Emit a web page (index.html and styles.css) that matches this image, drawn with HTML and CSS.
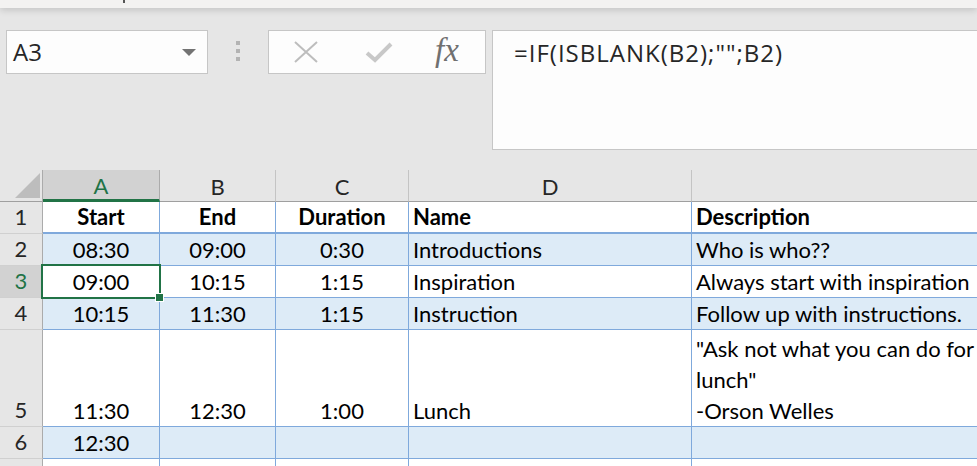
FILE: index.html
```html
<!DOCTYPE html>
<html lang="en">
<head>
  <meta charset="UTF-8">
  <title>Schedule - Excel</title>
  <link rel="stylesheet" href="styles.css">
</head>
<body>
  <div class="ribbon-edge"><span class="caret"></span></div>

  <div class="formula-row">
    <div class="name-box">
      <span>A3</span>
      <svg class="drop" width="14" height="8" viewBox="0 0 14 8"><path d="M0 0 L14 0 L7 7 Z" fill="#737373"/></svg>
    </div>
    <div class="grip"><i></i><i></i><i></i></div>
    <div class="fx-buttons">
      <svg class="cancel" width="26" height="22" viewBox="0 0 26 22"><path d="M2 1 L24 21 M24 1 L2 21" stroke="#bdbdbd" stroke-width="2" fill="none"/></svg>
      <svg class="enter" width="28" height="22" viewBox="0 0 28 22"><path d="M2 12 L10 19 L26 3" stroke="#c8c8c8" stroke-width="4" fill="none"/></svg>
      <span class="fx">fx</span>
    </div>
    <div class="formula-bar">=IF(ISBLANK(B2);"";B2)</div>
  </div>

  <div class="sheet">
    <div class="corner"><span></span></div>
    <div class="col-head active">A</div>
    <div class="col-head">B</div>
    <div class="col-head">C</div>
    <div class="col-head">D</div>
    <div class="col-head last"></div>

    <div class="row-head">1</div>
    <div class="cell c b">Start</div>
    <div class="cell c b">End</div>
    <div class="cell c b">Duration</div>
    <div class="cell b">Name</div>
    <div class="cell b">Description</div>

    <div class="row-head">2</div>
    <div class="cell c band">08:30</div>
    <div class="cell c band">09:00</div>
    <div class="cell c band">0:30</div>
    <div class="cell band">Introductions</div>
    <div class="cell band">Who is who??</div>

    <div class="row-head active">3</div>
    <div class="cell c sel">09:00<span class="selection"><span class="handle"></span></span></div>
    <div class="cell c">10:15</div>
    <div class="cell c">1:15</div>
    <div class="cell">Inspiration</div>
    <div class="cell">Always start with inspiration</div>

    <div class="row-head">4</div>
    <div class="cell c band">10:15</div>
    <div class="cell c band">11:30</div>
    <div class="cell c band">1:15</div>
    <div class="cell band">Instruction</div>
    <div class="cell band">Follow up with instructions.</div>

    <div class="row-head">5</div>
    <div class="cell c">11:30</div>
    <div class="cell c">12:30</div>
    <div class="cell c">1:00</div>
    <div class="cell">Lunch</div>
    <div class="cell">"Ask not what you can do for your<br>lunch"<br>-Orson Welles</div>

    <div class="row-head">6</div>
    <div class="cell c band">12:30</div>
    <div class="cell band"></div>
    <div class="cell band"></div>
    <div class="cell band"></div>
    <div class="cell band"></div>

    <div class="row-head"></div>
    <div class="cell"></div>
    <div class="cell"></div>
    <div class="cell"></div>
    <div class="cell"></div>
    <div class="cell"></div>
  </div>
</body>
</html>
```

FILE: styles.css
```css
* { box-sizing: border-box; }
body {
  margin: 0; background: #e6e6e6; overflow: hidden;
  font-family: Lato, "Liberation Sans", sans-serif; color: #000;
}

.ribbon-edge {
  height: 8px; background: #f3f2f1; position: relative;
  box-shadow: 0 2px 7px rgba(0,0,0,0.16);
}
.caret { position: absolute; left: 123px; top: 0; width: 2px; height: 3px; background: #555; }

.formula-row {
  display: flex; align-items: flex-start;
  padding: 22px 0 0 6px;
  font-family: "Open Sans", "Noto Sans", sans-serif;
}
.name-box {
  width: 202px; height: 44px; background: #fdfdfd; border: 1px solid #c6c6c6;
  display: flex; align-items: center; justify-content: space-between;
  padding: 0 11px 2px 6px; font-size: 24px; color: #262626;
}
.name-box .drop { margin-top: 3px; }
.grip {
  width: 60px; height: 44px;
  display: flex; flex-direction: column; align-items: center; justify-content: center; gap: 4px;
  padding-bottom: 2px;
}
.grip i { display: block; width: 4px; height: 4px; background: #b3b3b3; }
.fx-buttons {
  width: 218px; height: 44px; background: #fdfdfd; border: 1px solid #c6c6c6;
  display: flex; align-items: center;
  padding: 0 0 0 24px;
}
.fx-buttons .enter { margin-left: 46px; }
.fx-buttons .fx {
  margin-left: 42px;
  font-family: "Liberation Serif", "DejaVu Serif", serif; font-style: italic;
  font-size: 33px; color: #707070; margin-top: -3px;
}
.formula-bar {
  margin-left: 6px; flex: 1; height: 120px; background: #fdfdfd;
  border: 1px solid #c6c6c6; border-right: none;
  padding: 5px 0 0 21px; font-size: 24px; letter-spacing: 1px; color: #262626;
}

.sheet {
  margin-top: 20px;
  display: grid;
  grid-template-columns: 43px 117px 116px 133px 283px 420px;
  grid-template-rows: 32px 32px 32px 32px 32px 97px 32px 32px;
  font-size: 22px;
}
.corner { position: relative; border-right: 1px solid #ababab; border-bottom: 1px solid #9f9f9f; }
.corner span {
  position: absolute; left: 15px; top: 3px; width: 0; height: 0;
  border-left: 25px solid transparent; border-bottom: 25px solid #bdbdbd;
}
.col-head {
  display: flex; align-items: center; justify-content: center; padding-top: 2px;
  border-right: 1px solid #c4c4c4; border-bottom: 1px solid #9f9f9f; color: #262626;
}
.col-head.last { border-right: none; }
.col-head.active { background: #d2d2d2; color: #217346; border-bottom: 3px solid #217346; border-right-color: #ababab; }

.row-head {
  display: flex; align-items: flex-end; justify-content: center;
  line-height: 32px; color: #262626;
  border-right: 1px solid #ababab; border-bottom: 1px solid #d0d0d0;
}
.row-head.active { background: #d2d2d2; color: #217346; }

.cell {
  background: #fff; line-height: 31px; white-space: nowrap; overflow: hidden;
  display: flex; flex-direction: column; justify-content: flex-end;
  padding: 0 4px; border-right: 1px solid #7fa9dc; border-bottom: 1px solid #7fa9dc;
}
.cell.c { align-items: center; }
.cell.b { font-weight: bold; border-bottom-width: 2px; }
.cell.band { background: #ddebf7; }
.cell.sel { position: relative; overflow: visible; }
.selection {
  position: absolute; left: -2px; top: -2px; right: -2px; bottom: -2px;
  border: 2px solid #217346;
}
.handle {
  position: absolute; right: -5px; bottom: -5px; width: 9px; height: 9px;
  background: #217346; border: 1px solid #fff;
}
```
